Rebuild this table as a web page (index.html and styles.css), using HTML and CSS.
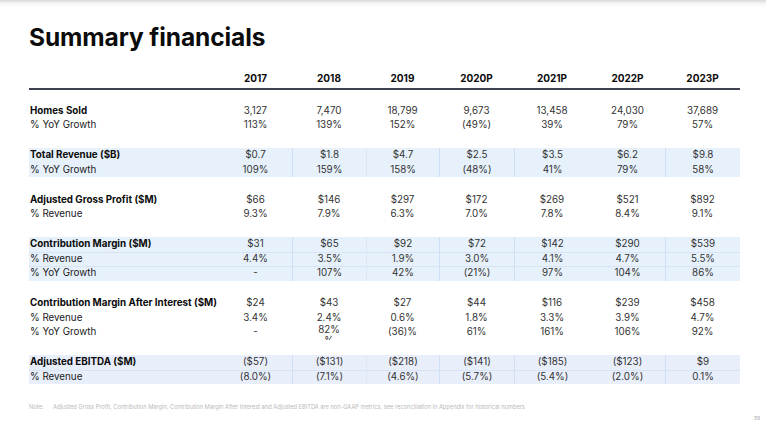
FILE: index.html
```html
<!DOCTYPE html>
<html lang="en">
<head>
<meta charset="utf-8">
<title>Summary financials</title>
<link rel="stylesheet" href="styles.css">
</head>
<body>
<div class="page">
  <h1 class="title">Summary financials</h1>

  <div class="row head">
    <div class="lbl"></div>
    <div>2017</div><div>2018</div><div>2019</div><div>2020P</div><div>2021P</div><div>2022P</div><div>2023P</div>
  </div>

  <div class="groups">
    <div class="group">
      <div class="row"><div class="lbl b">Homes Sold</div><div>3,127</div><div>7,470</div><div>18,799</div><div>9,673</div><div>13,458</div><div>24,030</div><div>37,689</div></div>
      <div class="row"><div class="lbl">% YoY Growth</div><div>113%</div><div>139%</div><div>152%</div><div>(49%)</div><div>39%</div><div>79%</div><div>57%</div></div>
    </div>

    <div class="group shade">
      <div class="row"><div class="lbl b">Total Revenue ($B)</div><div>$0.7</div><div>$1.8</div><div>$4.7</div><div>$2.5</div><div>$3.5</div><div>$6.2</div><div>$9.8</div></div>
      <div class="row"><div class="lbl">% YoY Growth</div><div>109%</div><div>159%</div><div>158%</div><div>(48%)</div><div>41%</div><div>79%</div><div>58%</div></div>
    </div>

    <div class="group">
      <div class="row"><div class="lbl b">Adjusted Gross Profit ($M)</div><div>$66</div><div>$146</div><div>$297</div><div>$172</div><div>$269</div><div>$521</div><div>$892</div></div>
      <div class="row"><div class="lbl">% Revenue</div><div>9.3%</div><div>7.9%</div><div>6.3%</div><div>7.0%</div><div>7.8%</div><div>8.4%</div><div>9.1%</div></div>
    </div>

    <div class="group shade ruled">
      <div class="row"><div class="lbl b">Contribution Margin ($M)</div><div>$31</div><div>$65</div><div>$92</div><div>$72</div><div>$142</div><div>$290</div><div>$539</div></div>
      <div class="row"><div class="lbl">% Revenue</div><div>4.4%</div><div>3.5%</div><div>1.9%</div><div>3.0%</div><div>4.1%</div><div>4.7%</div><div>5.5%</div></div>
      <div class="row"><div class="lbl">% YoY Growth</div><div>-</div><div>107%</div><div>42%</div><div>(21%)</div><div>97%</div><div>104%</div><div>86%</div></div>
    </div>

    <div class="group">
      <div class="row"><div class="lbl b">Contribution Margin After Interest ($M)</div><div>$24</div><div>$43</div><div>$27</div><div>$44</div><div>$116</div><div>$239</div><div>$458</div></div>
      <div class="row"><div class="lbl">% Revenue</div><div>3.4%</div><div>2.4%</div><div>0.6%</div><div>1.8%</div><div>3.3%</div><div>3.9%</div><div>4.7%</div></div>
      <div class="row"><div class="lbl">% YoY Growth</div><div>-</div><div class="clip"><span class="clip-in">82%<br>%</span></div><div>(36)%</div><div>61%</div><div>161%</div><div>106%</div><div>92%</div></div>
    </div>

    <div class="group shade alt ruled">
      <div class="row"><div class="lbl b">Adjusted EBITDA ($M)</div><div>($57)</div><div>($131)</div><div>($218)</div><div>($141)</div><div>($185)</div><div>($123)</div><div>$9</div></div>
      <div class="row"><div class="lbl">% Revenue</div><div>(8.0%)</div><div>(7.1%)</div><div>(4.6%)</div><div>(5.7%)</div><div>(5.4%)</div><div>(2.0%)</div><div>0.1%</div></div>
    </div>
  </div>

  <div class="note"><span class="note-k">Note:</span><span>Adjusted Gross Profit, Contribution Margin, Contribution Margin After Interest and Adjusted EBITDA are non-GAAP metrics, see reconciliation in Appendix for historical numbers</span></div>
  <div class="pnum">39</div>
</div>
</body>
</html>
```

FILE: styles.css
```css
* { box-sizing: border-box; }
html, body { margin: 0; padding: 0; }
body {
  width: 766px;
  height: 423px;
  overflow: hidden;
  font-family: Inter, "Noto Sans", sans-serif;
  color: #333;
  background: #fff;
}
.page {
  height: 423px;
  padding: 22px 26px 0 29px;
  background: linear-gradient(#d9d9d9 0, #f3f3f3 3px, #fff 7px);
  display: flex;
  flex-direction: column;
}
.title {
  margin: 0;
  font-size: 24.5px;
  line-height: 30px;
  font-weight: 700;
  color: #0c0c0c;
  letter-spacing: -0.1px;
}
.row {
  display: grid;
  grid-template-columns: 190px 73px 74px 73px 75px 76px 75px 75px;
  height: 14.5px;
  font-size: 9.8px;
  line-height: 14.5px;
  text-align: center;
  white-space: nowrap;
}
.row .lbl {
  text-align: left;
  padding-left: 1px;
  color: #1a1a1a;
}
.row .lbl.b { font-weight: 700; color: #0c0c0c; }
.head {
  margin-top: 19px;
  height: 14px;
  line-height: 14px;
  font-size: 10px;
  font-weight: 700;
  color: #0c0c0c;
  border-bottom: 2px solid #3d4250;
  box-sizing: content-box;
  padding-bottom: 3px;
}
.groups {
  margin-top: 13.5px;
  display: flex;
  flex-direction: column;
  gap: 15.5px;
}
.shade { background: #e7f1fb; }
.shade.alt { background: #e8eefa; }
.shade .row > div:nth-child(3),
.shade .row > div:nth-child(5),
.shade .row > div:nth-child(6),
.shade .row > div:nth-child(8) { border-left: 1px solid #cfe0f4; }
.shade .row > div:nth-child(4) { border-left: 1px solid #dce8f6; }
.ruled .row + .row { border-top: 1px solid #d6e4f5; }
.ruled .row + .row > div { margin-top: -1px; }
.clip { overflow: hidden; }
.clip-in {
  display: block;
  line-height: 11px;
  margin-top: -1px;
}
.note {
  margin-top: 19px;
  font-size: 5.7px;
  line-height: 8px;
  color: #b9b9b9;
  display: flex;
  white-space: nowrap;
}
.note-k { width: 24px; flex: none; }
.pnum {
  align-self: flex-end;
  margin-right: -20px;
  margin-top: 4px;
  font-size: 5px;
  color: #a8a8a8;
}
```
